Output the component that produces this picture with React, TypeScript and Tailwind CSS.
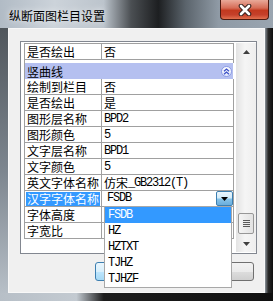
import React from "react";

const mono = "font-['Liberation_Mono',monospace] tracking-[-1.2px]";

const Mixed = ({ s }: { s: string }) => (
  <>
    {s
      .split(/([\u4e00-\u9fff]+)/)
      .filter(Boolean)
      .map((p, i) =>
        /[\u4e00-\u9fff]/.test(p) ? (
          <span key={i}>{p}</span>
        ) : (
          <span key={i} className={`relative -top-[2px] ${mono}`}>
            {p}
          </span>
        )
      )}
  </>
);

const Row = ({ name, value, children }: { name: React.ReactNode; value?: string; children?: React.ReactNode }) => (
  <div className="flex h-[16px] border-b border-[#a0a0a0] leading-[15px]">
    <div className="w-[76px] pl-[2px] whitespace-nowrap overflow-hidden">{name}</div>
    <div className="w-[1px] bg-[#a0a0a0]" />
    <div className="flex-1 pl-[2px] whitespace-nowrap">{children ?? (value ? <Mixed s={value} /> : null)}</div>
  </div>
);

const rows: [string, string][] = [
  ["绘制到栏目", "否"],
  ["是否绘出", "是"],
  ["图形层名称", "BPD2"],
  ["图形颜色", "5"],
  ["文字层名称", "BPD1"],
  ["文字颜色", "5"],
  ["英文字体名称", "仿宋_GB2312(T)"],
];

const fonts = ["FSDB", "HZ", "HZTXT", "TJHZ", "TJHZF"];

export default function App() {
  return (
    <div className="relative w-[273px] h-[301px] overflow-hidden flex flex-col bg-[#2b2e31] text-[12px] text-black font-['Noto_Sans_CJK_SC',sans-serif]">
      {/* title bar */}
      <div className="h-[28px] flex items-start bg-[linear-gradient(90deg,#b1bbc5_0%,#ccd3da_20%,#bcc4cc_38%,#4b4f53_48%,#1d1f21_58%,#5b646c_68%,#8f9aa5_80%,#9aa5b0_100%)]">
        <div className="pl-[9px] pt-[8px] leading-[15px] [text-shadow:0_0_6px_rgba(255,255,255,0.9)]">纵断面图栏目设置</div>
        <div className="ml-auto mr-[4px] w-[49px] h-[20px] flex items-center justify-center rounded-b-[4px] border border-t-0 border-[#4e1a10] bg-[linear-gradient(180deg,#e9a999_0%,#d66c56_42%,#c3391f_55%,#c5402a_78%,#e2714f_100%)]">
          <svg width="14" height="12" viewBox="0 0 14 12">
            <path d="M3 2 L11 10 M11 2 L3 10" stroke="#3a2420" strokeWidth="4.6" strokeLinecap="round" />
            <path d="M3 2 L11 10 M11 2 L3 10" stroke="#ffffff" strokeWidth="2.6" strokeLinecap="round" />
          </svg>
        </div>
      </div>

      <div className="flex h-[265px]">
        <div className="w-[8px] bg-[linear-gradient(180deg,#50565c_0%,#7e8790_55%,#b7bfc7_100%)]" />
        {/* client area */}
        <div className="w-[257px] flex flex-col bg-[#f0f0f0] border border-[#f8f8f8] pl-[11px] pr-[7px] pt-[12px] pb-[11px]">
          {/* property grid box */}
          <div className="h-[213px] w-[237px] border border-[#828790] bg-white flex pl-[3px] pt-[1px] pb-[1px]">
            <div className="w-[210px] flex flex-col">
              <div className="border-x border-[#a0a0a0]">
                <div className="border-t border-[#a0a0a0]">
                  <Row name="是否绘出" value="否" />
                </div>
              </div>
              <div className="h-[3px] border-x border-[#a0a0a0]" />
              <div className="border-l border-[#a0a0a0]">
                <div className="h-[16px] mr-[1px] flex items-center pl-[2px] leading-[15px] bg-[#b5c0f0]">
                  <span>竖曲线</span>
                  <div className="ml-auto mr-[1px] w-[11px] h-[11px] rounded-full border border-[#8c9ce6] bg-[linear-gradient(180deg,#ffffff,#dfe5fb)] flex items-center justify-center">
                    <svg width="7" height="7" viewBox="0 0 7 7">
                      <path d="M1 3.2 L3.5 1 L6 3.2 M1 6.2 L3.5 4 L6 6.2" fill="none" stroke="#3a4fc6" strokeWidth="1.3" />
                    </svg>
                  </div>
                </div>
              </div>
              <div className="border-x border-[#a0a0a0]">
                {rows.map(([n, v]) => (
                  <Row key={n} name={n} value={v} />
                ))}
                <Row
                  name={
                    <span className="-ml-[1px] px-[1px] inline-block leading-[14px] bg-[#3399ff] text-white">汉字字体名称</span>
                  }
                >
                  <div className="-ml-[2px] h-full flex items-center bg-white">
                    <span className={`pl-[5px] ${mono}`}>FSDB</span>
                    <div className="ml-auto w-[17px] h-[15px] border border-[#3c7fb1] rounded-[2px] bg-[linear-gradient(180deg,#eaf6fd_0%,#d4ecf9_45%,#86c2e8_55%,#6aaedd_100%)] flex items-center justify-center">
                      <svg width="7" height="4" viewBox="0 0 7 4">
                        <path d="M0 0 H7 L3.5 4 Z" fill="#000" />
                      </svg>
                    </div>
                  </div>
                </Row>
                <Row name="字体高度" />
                <Row name="字宽比" />
              </div>
            </div>
            <div className="w-[2px]" />
            {/* scrollbar */}
            <div className="w-[20px] flex flex-col bg-[linear-gradient(90deg,#e3e3e3_0%,#f5f5f5_45%,#eeeeee_100%)]">
              <div className="h-[17px] flex items-center justify-center">
                <svg width="7" height="4" viewBox="0 0 7 4">
                  <path d="M0 4 H7 L3.5 0 Z" fill="#404040" />
                </svg>
              </div>
              <div className="flex-1 flex flex-col items-center">
                <div className="mt-[153px] w-[16px] h-[21px] rounded-[2px] border border-[#979797] bg-[linear-gradient(90deg,#f4f4f4,#e2e2e2)] flex flex-col items-center justify-center gap-[1px]">
                  <div className="w-[7px] h-[1px] bg-[#5a5a5a]" />
                  <div className="w-[7px] h-[1px] bg-[#5a5a5a]" />
                  <div className="w-[7px] h-[1px] bg-[#5a5a5a]" />
                  <div className="w-[7px] h-[1px] bg-[#5a5a5a]" />
                </div>
              </div>
              <div className="h-[17px] flex items-center justify-center">
                <svg width="7" height="4" viewBox="0 0 7 4">
                  <path d="M0 0 H7 L3.5 4 Z" fill="#404040" />
                </svg>
              </div>
            </div>
          </div>
          {/* buttons */}
          <div className="mt-[8px] flex gap-[9px] pl-[75px]">
            <button className="w-[75px] h-[19px] rounded-[3px] border border-[#3c7fb1] bg-[linear-gradient(180deg,#eaf6fd_0%,#d9f0fc_50%,#bee6fd_51%,#a7d9f5_100%)] leading-[17px]">
              确定
            </button>
            <button className="w-[75px] h-[19px] rounded-[3px] border border-[#707070] bg-[linear-gradient(180deg,#f2f2f2_0%,#ebebeb_50%,#dddddd_51%,#cfcfcf_100%)] leading-[17px]">
              取消
            </button>
          </div>
        </div>
        <div className="w-[8px] bg-[linear-gradient(90deg,#8d959d_0%,#2a2a2a_40%,#0e0e0e_100%)]" />
      </div>
      <div className="h-[8px] bg-[linear-gradient(90deg,#b7bfc7_0%,#c3cad1_28%,#1c1c1c_38%,#101010_100%)]" />

      {/* open dropdown list */}
      <div className="absolute left-[104px] top-[206px] w-[128px] border border-[#a8a8a8] bg-white">
        {fonts.map((f, i) => (
          <div key={f} className={`h-[16px] pl-[3px] leading-[16px] ${mono} ${i === 0 ? "bg-[#3399ff] text-white" : ""}`}>
            {f}
          </div>
        ))}
      </div>
    </div>
  );
}
